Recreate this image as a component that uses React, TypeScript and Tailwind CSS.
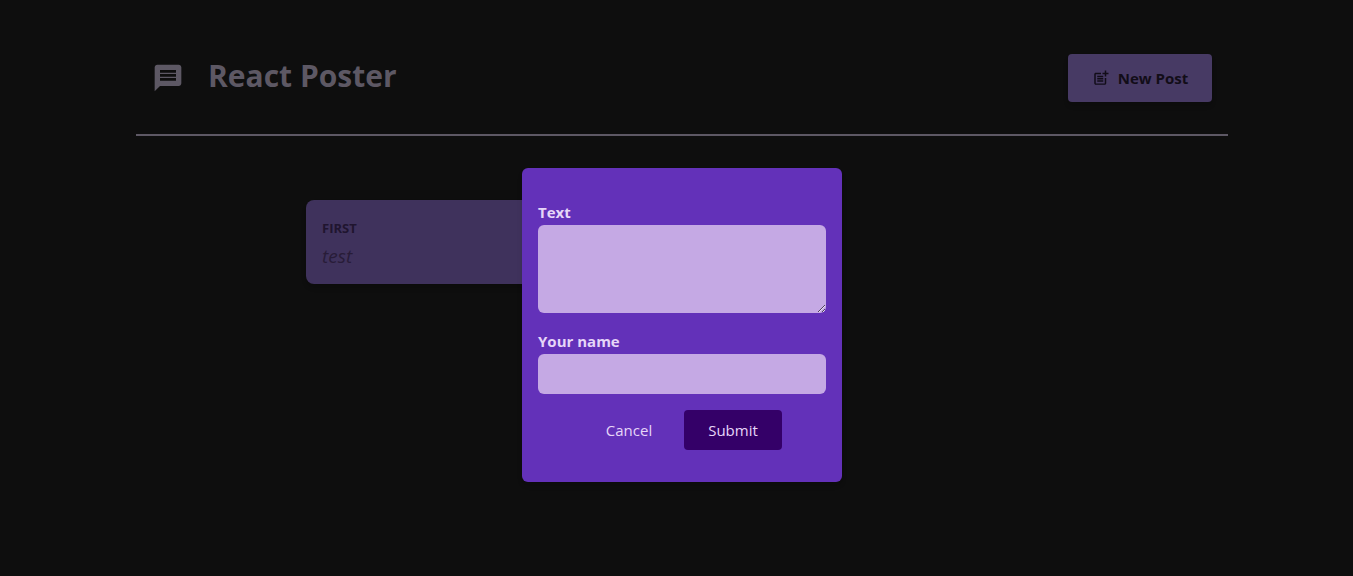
import { useState } from "react";
import { MdMessage, MdPostAdd } from "react-icons/md";

type PostData = { author: string; body: string };

function Header({ onCreate }: { onCreate: () => void }) {
  return (
    <header className="flex items-center justify-between border-b-2 border-[#5d5864] px-4 pt-[54px] pb-8 text-[#5d5864]">
      <h1 className="flex items-center gap-6 text-[30px] leading-[44px] font-bold">
        <MdMessage className="size-8" aria-hidden="true" />
        <span className="pb-1">React Poster</span>
      </h1>
      <button
        type="button"
        onClick={onCreate}
        className="flex h-12 w-36 items-center justify-center gap-2 rounded bg-[#473a64] text-[15px] font-bold whitespace-nowrap text-[#120d18] shadow-md"
      >
        <MdPostAdd className="size-[18px]" aria-hidden="true" />
        New Post
      </button>
    </header>
  );
}

function Post({ author, body }: PostData) {
  return (
    <li className="h-[84px] rounded-lg bg-[#3f325c] px-4 pt-4 shadow-md">
      <p className="text-[13px] leading-6 font-bold text-[#20152f] uppercase">{author}</p>
      <p className="pt-1 text-[19px] leading-6 text-[#281c38] italic">{body}</p>
    </li>
  );
}

function NewPost({ onClose, onAdd }: { onClose: () => void; onAdd: (post: PostData) => void }) {
  const [body, setBody] = useState("");
  const [author, setAuthor] = useState("");

  return (
    <form
      onSubmit={(event) => {
        event.preventDefault();
        onAdd({ author, body });
        onClose();
      }}
      className="flex flex-col gap-4 px-4 py-8 text-[15px] text-[#e6d6f8]"
    >
      <div className="flex flex-col">
        <label htmlFor="body" className="leading-[25px] font-bold">
          Text
        </label>
        <textarea
          id="body"
          value={body}
          onChange={(event) => setBody(event.target.value)}
          className="h-[88px] w-full resize rounded-md bg-[#c5a9e4] p-2 text-[#20152f] outline-none"
        />
      </div>
      <div className="flex flex-col">
        <label htmlFor="name" className="leading-[25px] font-bold">
          Your name
        </label>
        <input
          id="name"
          type="text"
          value={author}
          onChange={(event) => setAuthor(event.target.value)}
          className="h-10 w-full rounded-md bg-[#c5a9e4] px-2 text-[#20152f] outline-none"
        />
      </div>
      <div className="flex justify-center gap-2">
        <button type="button" onClick={onClose} className="h-10 w-[94px] rounded text-center">
          Cancel
        </button>
        <button type="submit" className="h-10 w-[98px] rounded bg-[#340068] text-center">
          Submit
        </button>
      </div>
    </form>
  );
}

export default function App() {
  const [open, setOpen] = useState(true);
  const [posts, setPosts] = useState<PostData[]>([{ author: "First", body: "test" }]);

  return (
    <div className="relative min-h-screen bg-[#0e0e0e] pr-[125px] pl-[136px] font-['Open_Sans','Noto_Sans',sans-serif]">
      <Header onCreate={() => setOpen(true)} />
      <main className="pt-16">
        <ul className="mx-auto grid max-w-[752px] grid-cols-3 gap-4">
          {posts.map((post, index) => (
            <Post key={index} {...post} />
          ))}
        </ul>
      </main>
      {open && (
        <div className="absolute inset-0 flex items-start justify-center pt-[168px] pr-[125px] pl-[136px]">
          <div role="dialog" aria-label="New Post" className="w-80 rounded-md bg-[#6331b9] shadow-md">
            <NewPost onClose={() => setOpen(false)} onAdd={(post) => setPosts([post, ...posts])} />
          </div>
        </div>
      )}
    </div>
  );
}
